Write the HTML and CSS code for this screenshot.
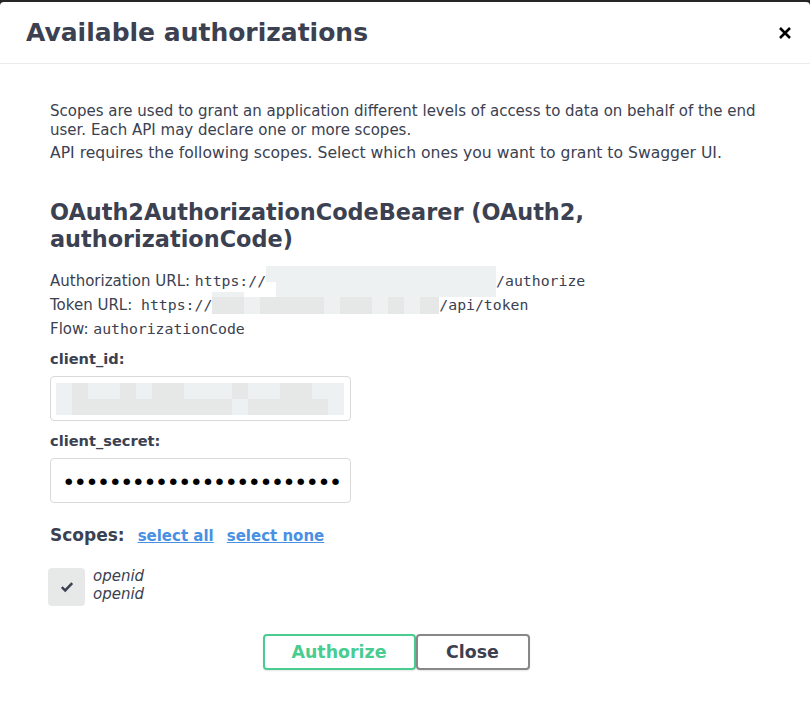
FILE: index.html
```
<!DOCTYPE html>
<html>
<head>
<meta charset="utf-8">
<link rel="stylesheet" href="styles.css">
</head>
<body>
<div class="modal">
  <div class="modal-header">
    <h3 class="modal-title">Available authorizations</h3>
    <button class="close-x" aria-label="Close">
      <svg width="14" height="14" viewBox="0 0 14 14"><path d="M2 2 L12 12 M12 2 L2 12" stroke="#000" stroke-width="2.6" stroke-linecap="butt" fill="none"/></svg>
    </button>
  </div>
  <div class="modal-content">
    <p class="desc desc-1">Scopes are used to grant an application different levels of access to data on behalf of the end user. Each API may declare one or more scopes.</p>
    <p class="desc desc-2">API requires the following scopes. Select which ones you want to grant to Swagger UI.</p>

    <h4 class="scheme-title">OAuth2AuthorizationCodeBearer (OAuth2, authorizationCode)</h4>

    <p class="meta">Authorization URL: <code>https://</code><span class="redact-auth"><span class="ra-top"></span><span class="ra-bottom"><span class="ra-notch"></span><span class="ra-fill"></span></span></span><code>/authorize</code></p>
    <p class="meta">Token URL: <code class="code-gap">https://</code><span class="redact-token"><span class="rt-first"></span><span class="rt l w16"></span><span class="rt d w64"></span><span class="rt l w16"></span><span class="rt d w32"></span><span class="rt l w16"></span><span class="rt d w16"></span><span class="rt l w16"></span><span class="rt d w19"></span></span><code>/api/token</code></p>
    <p class="meta">Flow: <code>authorizationCode</code></p>

    <div class="field">
      <label class="field-label">client_id:</label>
      <div class="input">
        <div class="pixels">
          <span class="l"></span><span class="d"></span><span class="l"></span><span class="l"></span><span class="d"></span><span class="l"></span><span class="d"></span><span class="d"></span><span class="l"></span><span class="l"></span><span class="l"></span><span class="d"></span><span class="l"></span><span class="l"></span><span class="d"></span><span class="d"></span><span class="l"></span><span class="l"></span>
          <span class="l"></span><span class="d"></span><span class="d"></span><span class="d"></span><span class="d"></span><span class="d"></span><span class="d"></span><span class="d"></span><span class="d"></span><span class="d"></span><span class="d"></span><span class="l"></span><span class="d"></span><span class="d"></span><span class="d"></span><span class="d"></span><span class="d"></span><span class="l"></span>
        </div>
      </div>
    </div>

    <div class="field field-secret">
      <label class="field-label">client_secret:</label>
      <div class="input secret"><span class="dots">●●●●●●●●●●●●●●●●●●●●●●●●</span></div>
    </div>

    <div class="scopes-head">
      <h2 class="scopes-title">Scopes:</h2>
      <a class="scope-link" href="#">select all</a>
      <a class="scope-link" href="#">select none</a>
    </div>

    <div class="scope-row">
      <span class="checkbox">
        <svg width="14" height="12" viewBox="0 0 14 12"><path d="M1.8 6.2 L5.2 9.4 L12.2 2.2" stroke="#3b4151" stroke-width="2.5" fill="none"/></svg>
      </span>
      <div class="scope-text">
        <div>openid</div>
        <div>openid</div>
      </div>
    </div>

    <div class="btn-wrap">
      <button class="btn btn-authorize">Authorize</button>
      <button class="btn btn-close">Close</button>
    </div>
  </div>
</div>
</body>
</html>
```

FILE: styles.css
```
html, body {
  margin: 0;
  padding: 0;
}
body {
  background: #262626;
  font-family: "DejaVu Sans", "Noto Sans", sans-serif;
  color: #3b4151;
}
.modal {
  margin-top: 2px;
  background: #fff;
  border-radius: 4px 4px 0 0;
  min-height: 718px;
}
.modal-header {
  display: flex;
  align-items: center;
  justify-content: space-between;
  height: 61px;
  padding: 0 18px 0 26px;
  border-bottom: 1px solid #ebebeb;
}
.modal-title {
  margin: 0;
  font-size: 25px;
  font-weight: 700;
  color: #3b4151;
}
.close-x {
  border: 0;
  background: none;
  padding: 0;
  width: 14px;
  height: 14px;
  display: flex;
}
.modal-content {
  padding: 38px 50px 0;
}
.desc {
  margin: 0;
  font-size: 15.6px;
  line-height: 19px;
}
.desc-1 {
  font-size: 15px;
}
.desc-2 {
  margin-top: 4px;
}
.scheme-title {
  margin: 36px 0 0;
  font-size: 22.4px;
  line-height: 27px;
  font-weight: 700;
}
.meta {
  margin: 0;
  font-size: 15px;
  line-height: 24px;
  height: 24px;
  display: flex;
  align-items: center;
  white-space: pre;
}
.scheme-title + .meta {
  margin-top: 16px;
}
code {
  font-family: "DejaVu Sans Mono", "Liberation Mono", monospace;
  font-size: 14.8px;
}
.code-gap {
  margin-left: 4px;
}
.redact-auth {
  align-self: flex-start;
  display: flex;
  flex-direction: column;
  width: 230px;
  height: 31px;
  margin-top: -3px;
}
.ra-top {
  height: 16px;
  background: #eef1f1;
}
.ra-bottom {
  display: flex;
  height: 15px;
}
.ra-notch {
  width: 10px;
  background: #fff;
}
.ra-fill {
  flex: 1;
  background: #eef1f1;
}
.redact-token {
  align-self: flex-start;
  display: flex;
  align-items: flex-end;
  height: 22px;
  margin-top: -1px;
}
.rt-first {
  width: 32px;
  height: 22px;
  background: linear-gradient(#eef1f1 0 5px, #e5e8e7 5px);
}
.rt {
  height: 17px;
}
.rt.d { background: #e5e8e7; }
.rt.l { background: #eef1f1; }
.w16 { width: 16px; }
.w19 { width: 19px; }
.w32 { width: 32px; }
.w64 { width: 64px; }

.field-label {
  display: block;
  font-size: 14.6px;
  font-weight: 700;
  line-height: 18px;
  margin-top: 9px;
}
.field-secret .field-label {
  margin-top: 11px;
}
.input {
  box-sizing: border-box;
  width: 301px;
  height: 45px;
  margin-top: 8px;
  border: 1px solid #d9d9d9;
  border-radius: 4px;
  background: #fff;
  display: flex;
  align-items: center;
  padding: 0 6px 0 5px;
}
.pixels {
  display: grid;
  grid-template-columns: repeat(18, 16px);
  grid-template-rows: 16px 16px;
}
.pixels .l { background: #eef1f1; }
.pixels .d { background: #e5e8e7; }
.secret {
  padding: 0 0 0 14px;
  overflow: hidden;
}
.dots {
  font-size: 8.6px;
  letter-spacing: 4.1px;
  color: #000;
  white-space: nowrap;
}
.scopes-head {
  display: flex;
  align-items: baseline;
  margin-top: 22px;
}
.scopes-title {
  margin: 0 13px 0 0;
  font-size: 17px;
  font-weight: 700;
  line-height: 20px;
}
.scope-link {
  font-size: 15px;
  font-weight: 700;
  color: #4990e2;
  text-decoration: underline;
  margin-right: 13px;
}
.scope-row {
  display: flex;
  align-items: center;
  margin-top: 23px;
  margin-left: -2px;
}
.checkbox {
  width: 37px;
  height: 38px;
  border-radius: 4px;
  background: #e6e9e8;
  display: flex;
  align-items: center;
  justify-content: center;
}
.scope-text {
  margin-left: 8px;
  margin-top: -4px;
  font-size: 15px;
  font-style: italic;
  line-height: 18px;
}
.btn-wrap {
  display: flex;
  justify-content: center;
  margin-top: 28px;
}
.btn {
  box-sizing: border-box;
  height: 36px;
  border-radius: 4px;
  background: #fff;
  font-family: "DejaVu Sans", sans-serif;
  font-size: 17.4px;
  font-weight: 700;
  box-shadow: 0 1px 2px rgba(0,0,0,0.1);
  padding: 0;
}
.btn-authorize {
  width: 153px;
  border: 2px solid #49cc90;
  color: #49cc90;
}
.btn-close {
  width: 114px;
  border: 2px solid #888;
  color: #3b4151;
  margin-right: 18px;
}
```
